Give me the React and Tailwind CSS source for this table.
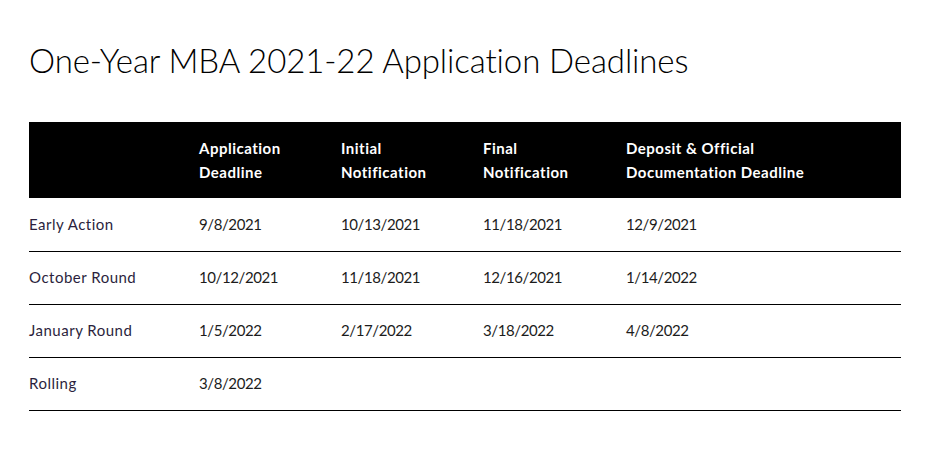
import React from 'react'

const rows = [
    { label: "Early Action", dates: ["9/8/2021", "10/13/2021", "11/18/2021", "12/9/2021"] },
    { label: "October Round", dates: ["10/12/2021", "11/18/2021", "12/16/2021", "1/14/2022"] },
    { label: "January Round", dates: ["1/5/2022", "2/17/2022", "3/18/2022", "4/8/2022"] },
    { label: "Rolling", dates: ["3/8/2022", "", "", ""] },
]

const headers = [
    ["Application", "Deadline"],
    ["Initial", "Notification"],
    ["Final", "Notification"],
    ["Deposit & Official", "Documentation Deadline"],
]

const widths = ["w-[170px]", "w-[142px]", "w-[142px]", "w-[143px]", ""]

const App = () => {
    return (
        <div className="min-h-[456px] bg-white px-[29px] pt-[37px] font-['Lato','Noto_Sans',sans-serif] text-[#1c1c1c]">
            <h1 className="text-[33px] font-light leading-[46px] tracking-[-0.1px] text-black">
                One-Year MBA 2021-22 Application Deadlines
            </h1>
            <table className="mt-[39px] w-[872px] table-fixed border-collapse">
                <thead>
                    <tr className="h-[76px] bg-black text-white">
                        <th className={widths[0]}></th>
                        {headers.map((h, i) => (
                            <th key={i} className={`${widths[i + 1]} text-left align-middle text-[15px] font-bold leading-[24px] tracking-[0.5px]`}>
                                {h[0]}<br />{h[1]}
                            </th>
                        ))}
                    </tr>
                </thead>
                <tbody>
                    {rows.map(r => (
                        <tr key={r.label} className="h-[53px] border-b border-black text-[15px]">
                            <td className="tracking-[0.5px] text-[#2b1f3d]">{r.label}</td>
                            {r.dates.map((d, j) => (
                                <td key={j} className="tracking-[-0.4px]">{d}</td>
                            ))}
                        </tr>
                    ))}
                </tbody>
            </table>
        </div>
    )
}

export default App
